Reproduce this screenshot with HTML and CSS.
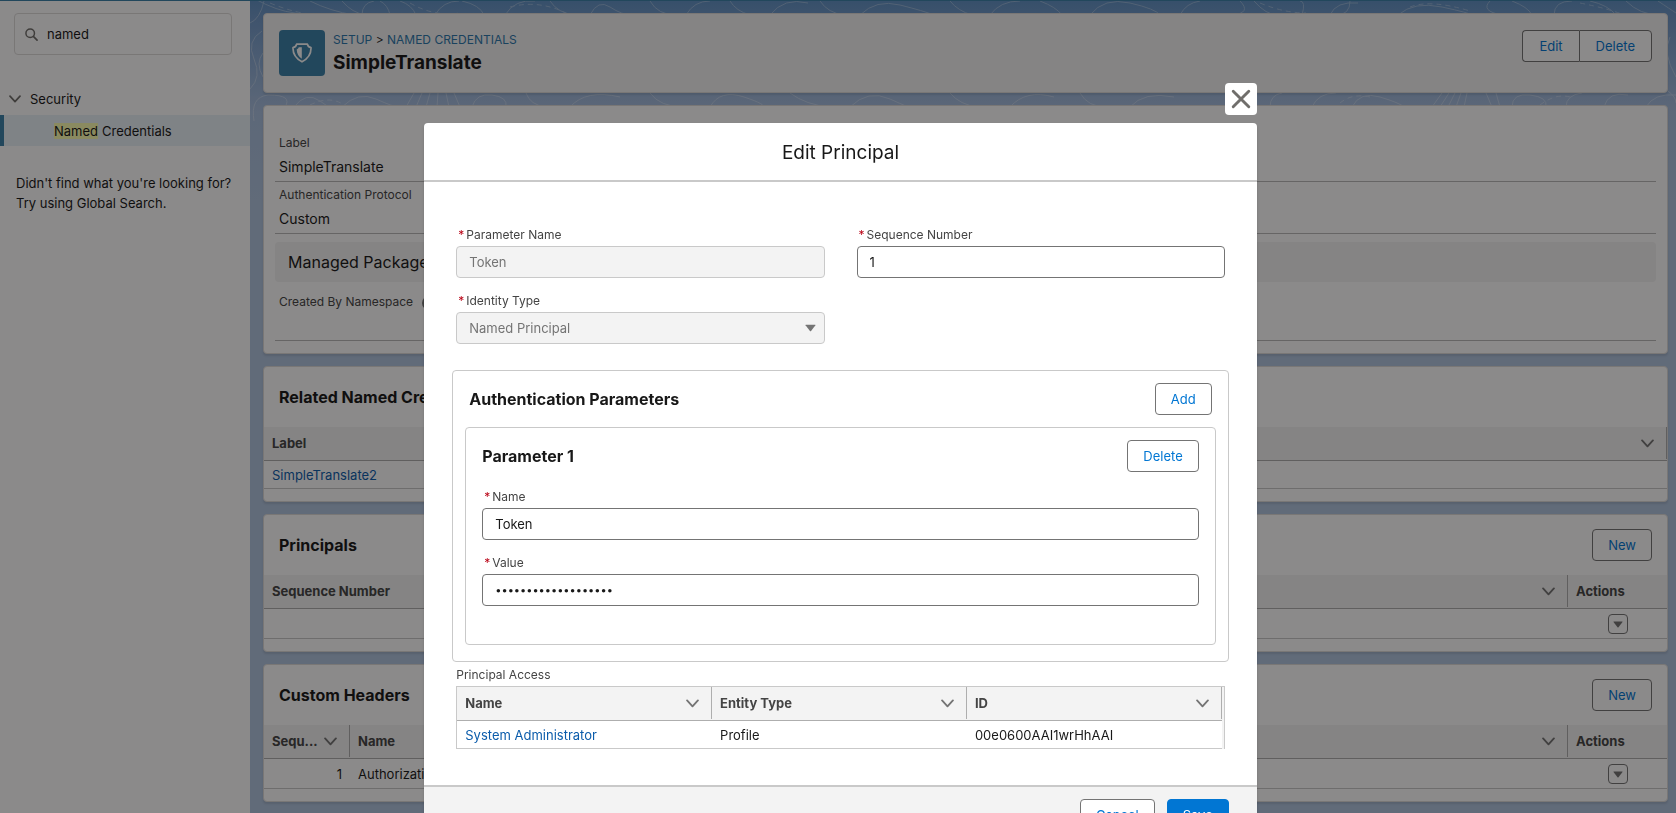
FILE: index.html
```html
<!DOCTYPE html>
<html lang="en">
<head>
    <meta charset="UTF-8">
    <meta name="viewport" content="width=device-width, initial-scale=1.0">
    <title>SimpleTranslate | Named Credentials</title>
    <link rel="stylesheet" href="styles.css">
</head>
<body>
    <!-- shared icons -->
    <svg class="sprite" aria-hidden="true">
        <symbol id="chevron" viewBox="0 0 12 12">
            <path d="M1 3.2 L6 8.6 L11 3.2" fill="none" stroke="currentColor" stroke-width="1.7" stroke-linecap="round" stroke-linejoin="round"/>
        </symbol>
        <symbol id="caret" viewBox="0 0 10 7">
            <path d="M0.8 0.5 h8.4 q0.6 0 0.3 0.6 L5.5 6.3 q-0.5 0.5 -1 0 L0.5 1.1 q-0.3 -0.6 0.3 -0.6z" fill="currentColor"/>
        </symbol>
    </svg>

    <div class="page">
        <aside class="sidebar">
            <label class="search">
                <svg viewBox="0 0 14 14"><circle cx="5.6" cy="5.6" r="4.6" fill="none" stroke="currentColor" stroke-width="1.6"/><path d="M9 9 L13 13" stroke="currentColor" stroke-width="1.8" stroke-linecap="round"/></svg>
                <input type="search" value="named" aria-label="Quick Find">
            </label>
            <nav class="tree">
                <button class="tree-group"><svg><use href="#chevron"/></svg>Security</button>
                <a class="tree-item" href="#"><mark>Named</mark> Credentials</a>
            </nav>
            <p class="hint">Didn't find what you're looking for?<br>Try using Global Search.</p>
        </aside>

        <main class="content">
            <svg class="contours" viewBox="0 0 1426 120" preserveAspectRatio="xMinYMin slice" aria-hidden="true">
                <g fill="none" stroke="#ffffff" stroke-width="1">
                    <path d="M0 22 q10 -4 14 -22 M5 -2 q22 12 40 14 t40 10 M60 0 q20 10 44 14 M92 0 q10 12 24 14 M112 14 q0 -12 12 -14 M140 14 q-2 -10 -10 -14 M150 0 q12 4 16 14 M185 14 q8 -14 24 -14 M212 0 q18 4 22 14 M255 14 q10 -16 30 -14 M300 0 q8 12 24 14 M340 14 q8 -16 20 -8 t22 8"/>
                    <path d="M400 0 q8 14 26 14 M436 14 q8 -14 24 -14 M480 0 q6 10 20 14 M520 14 q14 -18 38 -12 M570 0 q8 12 24 14 M610 14 q16 -16 40 -10 t34 10 M700 0 q8 10 22 14 M740 14 q10 -14 30 -14 M790 0 q16 6 22 14 M840 14 q14 -18 40 -12 t30 12 M930 14 q6 -12 20 -14"/>
                    <path d="M990 0 q12 12 -8 14 M1004 0 q12 14 24 14 M1052 14 q4 -14 -2 -14 M1080 14 q6 -14 28 -12 M1100 0 q0 14 -14 14 M1148 14 q16 -14 44 -8 t30 8 M1240 0 q-10 10 12 14 M1262 0 q16 6 20 14 M1304 14 q0 -14 18 -14 M1340 0 q18 4 26 14 M1376 0 q14 14 34 14 M1408 0 q12 8 18 12"/>
                    <path d="M4 120 q-4 -24 14 -26 h1 q24 0 16 12 M44 106 q12 -16 26 -6 t12 6 M92 106 q16 -16 34 -8 t22 8 M164 92 l-8 14 M172 92 l-6 14 M180 92 l-4 14 M188 92 l-1 14 M196 92 l3 14 M204 92 l6 14 M222 106 q4 -14 20 -12 t14 12 M276 92 q4 12 20 14 M320 106 q16 -18 50 -10"/>
                    <path d="M400 92 q10 14 34 14 M460 106 q10 -18 34 -10 t18 10 M540 92 q16 12 40 14 M600 106 q18 -18 40 -8 t20 8 M700 92 q10 12 28 14 M760 106 q16 -18 44 -10 M830 92 q8 14 26 14 M880 106 q14 -16 44 -10"/>
                    <path d="M1020 106 q0 -12 12 -14 M1062 106 q6 -14 24 -14 M1102 106 q8 -16 28 -10 t24 10 M1182 106 l10 -14 M1190 106 l9 -14 M1198 106 l7 -14 M1206 106 l5 -14 M1214 106 l3 -14 M1236 92 l6 14 M1246 92 l4 14 M1262 106 q0 -14 18 -12 t16 12 M1316 106 q0 -12 16 -14 M1354 106 q4 -16 24 -12 M1396 106 q8 -14 30 -12"/>
                    <path d="M12 30 q-16 10 -8 28 t-4 30 M13 52 q-8 10 0 24 M1420 36 q-8 16 6 40 M1418 90 q8 6 8 12"/>
                </g>
                <g fill="none" stroke="#ffffff" stroke-width="1" stroke-dasharray="5 4">
                    <path d="M20 2 q24 10 46 12 M160 2 q24 14 50 10 M260 6 q30 -8 60 8 M1010 2 q24 10 46 10 M1160 6 q20 -8 60 4 M1330 2 q30 6 44 12 M1090 102 q12 -10 30 -6 M60 104 q20 -10 34 0 M1290 104 q16 -12 30 -8"/>
                </g>
            </svg>

            <header class="card page-header">
                <div class="page-icon">
                    <svg viewBox="0 0 20 20"><path d="M4.600 1.200 h10.800 q0.600 2.800 3.600 3.500 c0.200 6 -3 11 -9 14.100 c-6 -3.100 -9.200 -8.100 -9 -14.100 q3 -0.700 3.600 -3.500z" fill="none" stroke="currentColor" stroke-width="1.700" stroke-linejoin="round"/><path d="M9.800 4.200 v11.600 c-3.200 -2.200 -4.900 -4.900 -5.100 -9.300 q1.700 -0.800 2.100 -2.300z" fill="currentColor"/></svg>
                </div>
                <div class="page-title">
                    <p class="crumbs"><a href="#">SETUP</a> &gt; <a href="#">NAMED CREDENTIALS</a></p>
                    <h1>SimpleTranslate</h1>
                </div>
                <div class="button-group">
                    <button class="btn">Edit</button>
                    <button class="btn">Delete</button>
                </div>
            </header>

            <section class="card details">
                <div class="detail">
                    <span class="detail-label">Label</span>
                    <span class="detail-value">SimpleTranslate</span>
                </div>
                <div class="detail">
                    <span class="detail-label">Authentication Protocol</span>
                    <span class="detail-value">Custom</span>
                </div>
                <h2 class="band">Managed Package</h2>
                <div class="detail detail-last">
                    <span class="detail-label">Created By Namespace <i class="info"></i></span>
                </div>
            </section>

            <section class="card">
                <div class="card-head"><h2>Related Named Credentials</h2></div>
                <table class="grid">
                    <thead>
                        <tr><th><div class="th">Label<svg><use href="#chevron"/></svg></div></th></tr>
                    </thead>
                    <tbody>
                        <tr><td><a href="#">SimpleTranslate2</a></td></tr>
                    </tbody>
                </table>
            </section>

            <section class="card">
                <div class="card-head"><h2>Principals</h2><button class="btn">New</button></div>
                <table class="grid">
                    <thead>
                        <tr>
                            <th><div class="th">Sequence Number<svg><use href="#chevron"/></svg></div></th>
                            <th class="col-actions"><div class="th">Actions</div></th>
                        </tr>
                    </thead>
                    <tbody>
                        <tr><td></td><td class="action"><button class="menu-btn" aria-label="Show actions"><svg><use href="#caret"/></svg></button></td></tr>
                    </tbody>
                </table>
            </section>

            <section class="card">
                <div class="card-head"><h2>Custom Headers</h2><button class="btn">New</button></div>
                <table class="grid">
                    <thead>
                        <tr>
                            <th class="col-seq"><div class="th">Sequ...<svg><use href="#chevron"/></svg></div></th>
                            <th><div class="th">Name<svg><use href="#chevron"/></svg></div></th>
                            <th class="col-actions"><div class="th">Actions</div></th>
                        </tr>
                    </thead>
                    <tbody>
                        <tr><td class="num">1</td><td>Authorization</td><td class="action"><button class="menu-btn" aria-label="Show actions"><svg><use href="#caret"/></svg></button></td></tr>
                    </tbody>
                </table>
            </section>
        </main>
    </div>

    <div class="backdrop">
        <div class="modal" role="dialog" aria-labelledby="modal-title">
            <button class="close" aria-label="Close">
                <svg viewBox="0 0 18 18"><path d="M2 2 L16 16 M16 2 L2 16" stroke="currentColor" stroke-width="2.600" stroke-linecap="round"/></svg>
            </button>
            <header class="modal-header"><h2 id="modal-title">Edit Principal</h2></header>

            <form class="modal-body">
                <div class="form-grid">
                    <div class="field">
                        <label for="param-name"><abbr>*</abbr>Parameter Name</label>
                        <input id="param-name" type="text" value="Token" disabled>
                    </div>
                    <div class="field">
                        <label for="seq"><abbr>*</abbr>Sequence Number</label>
                        <input id="seq" type="text" value="1">
                    </div>
                    <div class="field">
                        <label for="identity"><abbr>*</abbr>Identity Type</label>
                        <div class="select">
                            <select id="identity" disabled><option>Named Principal</option></select>
                            <svg><use href="#caret"/></svg>
                        </div>
                    </div>
                </div>

                <section class="box">
                    <div class="box-head"><h3>Authentication Parameters</h3><button type="button" class="btn">Add</button></div>
                    <section class="box box-inner">
                        <div class="box-head"><h3>Parameter 1</h3><button type="button" class="btn">Delete</button></div>
                        <div class="field">
                            <label for="p-name"><abbr>*</abbr>Name</label>
                            <input id="p-name" type="text" value="Token">
                        </div>
                        <div class="field">
                            <label for="p-value"><abbr>*</abbr>Value</label>
                            <input id="p-value" type="password" value="abcdefghijklmnopqrs">
                        </div>
                    </section>
                </section>

                <p class="table-label">Principal Access</p>
                <div class="access">
                    <table class="grid">
                        <thead>
                            <tr>
                                <th><div class="th">Name<svg><use href="#chevron"/></svg></div></th>
                                <th><div class="th">Entity Type<svg><use href="#chevron"/></svg></div></th>
                                <th><div class="th">ID<svg><use href="#chevron"/></svg></div></th>
                            </tr>
                        </thead>
                        <tbody>
                            <tr><td><a href="#">System Administrator</a></td><td>Profile</td><td>00e0600AAI1wrHhAAI</td></tr>
                        </tbody>
                    </table>
                </div>
            </form>

            <footer class="modal-footer">
                <button class="btn">Cancel</button>
                <button class="btn btn-brand">Save</button>
            </footer>
        </div>
    </div>
</body>
</html>
```
FILE: styles.css
```css
* {
    margin: 0;
    padding: 0;
    box-sizing: border-box;
}

body {
    height: 100vh;
    overflow: hidden;
    font-family: Inter, "Liberation Sans", sans-serif;
    font-size: 13px;
    line-height: 20px;
    color: #181818;
}

a {
    color: #0b5cab;
    text-decoration: none;
}

button, input, select {
    font: inherit;
    color: inherit;
}

h1, h2, h3 {
    font-size: 16px;
    line-height: 20px;
    font-weight: 700;
}

.sprite {
    display: none;
}

.page {
    display: flex;
    height: 100vh;
    border-top: 1px solid #3a81a8;
    overflow: hidden;
}

/* sidebar */
.sidebar {
    flex: 0 0 250px;
    min-width: 0;
    padding-top: 12px;
    background: #fff;
}

.search {
    display: flex;
    align-items: center;
    gap: 9px;
    height: 42px;
    margin: 0 18px 0 14px;
    padding: 0 10px;
    border: 1px solid #dddbda;
    border-radius: 4px;
    color: #706e6b;
}

.search svg {
    width: 13px;
    height: 13px;
}

.search input {
    flex: 1;
    min-width: 0;
    border: 0;
    outline: 0;
    appearance: none;
    background: none;
    color: #181818;
}

.tree {
    margin-top: 28px;
}

.tree-group {
    display: flex;
    align-items: center;
    gap: 9px;
    width: 100%;
    height: 32px;
    padding-left: 9px;
    border: 0;
    background: none;
}

.tree-group svg {
    width: 12px;
    height: 12px;
    color: #706e6b;
}

.tree-item {
    display: flex;
    gap: 4px;
    align-items: center;
    height: 31px;
    padding-left: 50px;
    border-left: 4px solid #3a81a8;
    background: #e8f1f7;
    color: #181818;
}

.tree-item mark {
    line-height: 16px;
    background: #fdffb0;
    color: inherit;
}

.hint {
    margin-top: 27px;
    padding: 0 8px 0 16px;
    white-space: nowrap;
}

/* main column */
.content {
    position: relative;
    flex: 1;
    min-width: 0;
    display: flex;
    flex-direction: column;
    gap: 12px;
    padding: 12px 8px 12px 13px;
    background: linear-gradient(#6091c4 0, #6f98c8 16px, #a8bfdf 110px, #b0c4df 200px);
}

.contours {
    position: absolute;
    top: 0;
    left: 0;
    width: 100%;
    height: 120px;
    opacity: 0.3;
}

.card {
    position: relative;
    flex-shrink: 0;
    padding-bottom: 12px;
    border: 1px solid #dddbda;
    border-radius: 4px;
    background: #fff;
    box-shadow: 0 2px 2px rgba(0, 0, 0, 0.1);
}

.page-header {
    display: flex;
    align-items: flex-start;
    gap: 8px;
    padding: 16px 15px;
    background: #f3f3f3;
}

.page-icon {
    display: grid;
    place-items: center;
    width: 46px;
    height: 46px;
    border-radius: 4px;
    background: #3a81a8;
    color: #fff;
}

.page-icon svg {
    width: 20px;
    height: 20px;
}

.page-title {
    flex: 1;
}

.crumbs {
    font-size: 12px;
}

.crumbs a {
    color: #2b78ac;
}

.page-title h1 {
    font-size: 19px;
    line-height: 26px;
}

.btn {
    height: 32px;
    padding: 0 15px;
    border: 1px solid #747474;
    border-radius: 4px;
    background: #fff;
    color: #0176d3;
}

.btn-brand {
    border-color: #0176d3;
    background: #0176d3;
    color: #fff;
}

.button-group {
    display: flex;
}

.button-group .btn {
    padding: 0 16px;
}

.button-group .btn:first-child {
    border-right: 0;
    border-radius: 4px 0 0 4px;
}

.button-group .btn:last-child {
    border-radius: 0 4px 4px 0;
}

.details {
    padding: 24px 11px 12px;
}

.detail {
    display: flex;
    flex-direction: column;
    height: 52px;
    padding: 3px 4px;
    border-bottom: 1px solid #b9b9b9;
}

.detail-label {
    font-size: 12px;
    color: #444;
}

.detail-value {
    font-size: 14px;
    line-height: 28px;
}

.band {
    margin-top: 8px;
    padding: 10px 13px;
    border-radius: 4px;
    background: #f3f3f3;
    font-weight: 400;
}

.detail-last {
    height: 59px;
    padding-top: 10px;
}

.info {
    display: inline-block;
    width: 14px;
    height: 14px;
    margin-left: 6px;
    border-radius: 50%;
    background: #747474;
    vertical-align: middle;
}

.card-head, .box-head {
    display: flex;
    align-items: center;
    justify-content: space-between;
}

.card-head {
    height: 60px;
    padding: 0 15px;
}

/* tables */
.grid {
    width: 100%;
    table-layout: fixed;
    border-collapse: separate;
    border-spacing: 0;
}

.grid th {
    height: 34px;
    border-bottom: 1px solid #aeaeae;
    background: #f3f3f3;
    color: #444;
    font-weight: 700;
    text-align: left;
    vertical-align: top;
}

.th {
    display: flex;
    align-items: center;
    justify-content: space-between;
    height: 32px;
    padding: 0 12px 0 8px;
    border-right: 1px solid #aeaeae;
}

.th svg {
    width: 13px;
    height: 13px;
    color: #747474;
}

.grid td {
    height: 28px;
    padding: 0 8px;
    border-bottom: 1px solid #c9c9c9;
}

.grid .col-actions {
    width: 99px;
}

.col-actions .th {
    border-right: 0;
}

.grid .col-seq {
    width: 86px;
}

.grid .num {
    text-align: right;
}

.grid .action {
    height: 30px;
    text-align: center;
}

.menu-btn {
    display: inline-grid;
    place-items: center;
    width: 20px;
    height: 20px;
    border: 1px solid #747474;
    border-radius: 4px;
    background: #fff;
    color: #747474;
    vertical-align: middle;
}

.menu-btn svg {
    width: 10px;
    height: 7px;
}

/* modal */
.backdrop {
    position: fixed;
    inset: 0;
    padding: 123px 3px 0 8px;
    background: rgba(8, 7, 7, 0.47);
}

.modal {
    position: relative;
    width: 50%;
    margin: 0 auto;
    border-radius: 4px;
    background: #fff;
    box-shadow: 0 2px 3px rgba(0, 0, 0, 0.16);
}

.close {
    position: absolute;
    top: -40px;
    right: 0;
    display: grid;
    place-items: center;
    width: 32px;
    height: 32px;
    border: 0;
    border-radius: 4px;
    background: #fff;
    color: #706e6b;
}

.close svg {
    width: 20px;
    height: 20px;
}

.modal-header {
    padding: 17px 16px 15px;
    border-bottom: 2px solid #c9c9c9;
    text-align: center;
}

.modal-header h2 {
    font-size: 19px;
    line-height: 25px;
    font-weight: 400;
}

.modal-body {
    padding: 42px 32px 36px;
}

.form-grid {
    display: grid;
    grid-template-columns: 1fr 1fr;
    column-gap: 32px;
}

.field {
    margin-bottom: 12px;
}

.field label {
    display: block;
    height: 22px;
    padding: 3px 2px;
    font-size: 12px;
    line-height: 16px;
    color: #444;
}

.field abbr {
    margin-right: 2px;
    color: #ba0517;
}

.field input, .field select {
    display: block;
    width: 100%;
    height: 32px;
    padding: 0 12px;
    border: 1px solid #747474;
    border-radius: 4px;
    background: #fff;
}

.field input[type="password"] {
    font-size: 11px;
}

.field input:disabled, .field select:disabled {
    border-color: #c9c9c9;
    background: #f3f3f3;
    color: #747474;
    opacity: 1;
}

.field select {
    appearance: none;
}

.select {
    position: relative;
}

.select svg {
    position: absolute;
    top: 12px;
    right: 9px;
    width: 11px;
    height: 8px;
    color: #747474;
}

.box {
    margin: 14px -4px 0;
    padding: 12px 12px 16px;
    border: 1px solid #c9c9c9;
    border-radius: 4px;
}

.box-head {
    padding: 0 4px;
}

.box-inner {
    margin: 12px 0 0;
    padding: 12px 16px 26px;
}

.box-inner .box-head {
    padding: 0;
    margin-bottom: 14px;
}

.table-label {
    padding: 3px 0 1px;
    font-size: 12px;
    color: #444;
}

.access {
    padding-right: 2px;
    border: 1px solid #c9c9c9;
    border-bottom: 0;
    background: #f3f3f3;
}

.access td {
    background: #fff;
}

.modal-footer {
    display: flex;
    justify-content: flex-end;
    gap: 12px;
    padding: 12px 28px;
    border-top: 2px solid #c9c9c9;
    background: #f3f3f3;
}
```
